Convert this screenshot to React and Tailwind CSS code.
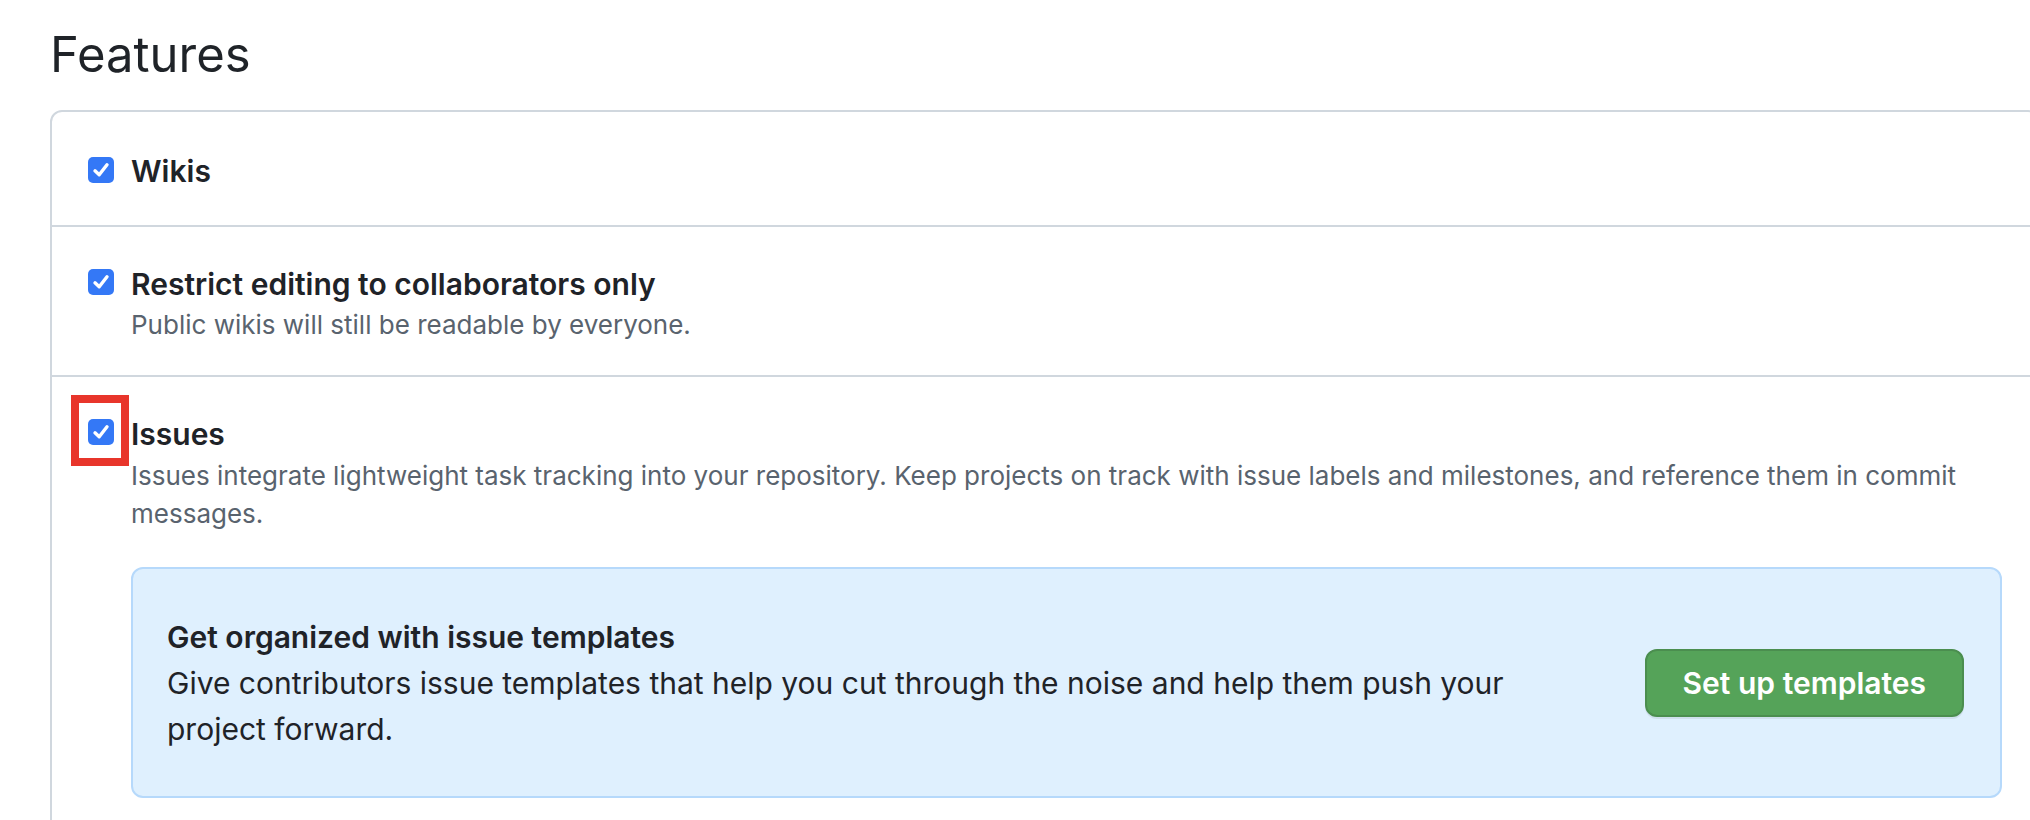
import React from "react";

const CheckBox = () => (
  <div className="w-[26px] h-[26px] rounded-[5px] bg-[#3478f6] flex items-center justify-center shrink-0">
    <svg width="22" height="22" viewBox="0 0 22 22" fill="none">
      <path
        d="M5 11.8 L9.2 15.8 L17 5.8"
        stroke="white"
        strokeWidth="3.4"
        strokeLinecap="round"
        strokeLinejoin="round"
      />
    </svg>
  </div>
);

const App = () => {
  return (
    <div className="w-[2030px] h-[820px] overflow-hidden bg-white font-['Inter',sans-serif] text-[#1f2328]">
      <div className="pl-[50px] pt-[30px]">
        <h2 className="text-[49px] leading-[50px] font-normal">Features</h2>

        <div className="mt-[30px] w-[1990px] border-2 border-[#d0d7de] rounded-[12px]">
          {/* Wikis */}
          <div className="flex gap-[17px] px-[36px] pt-[41px] pb-[36px] border-b-2 border-[#d0d7de]">
            <div className="mt-[4px]">
              <CheckBox />
            </div>
            <div className="flex-1 text-[30px] leading-[36px] font-semibold">
              Wikis
            </div>
          </div>

          {/* Restrict editing */}
          <div className="flex gap-[17px] px-[36px] pt-[39px] pb-[31px] border-b-2 border-[#d0d7de]">
            <div className="mt-[3px]">
              <CheckBox />
            </div>
            <div className="flex-1">
              <div className="text-[30px] leading-[36px] font-semibold">
                Restrict editing to collaborators only
              </div>
              <p className="mt-[4px] text-[26px] leading-[38px] text-[#59636e]">
                Public wikis will still be readable by everyone.
              </p>
            </div>
          </div>

          {/* Issues */}
          <div className="flex gap-[17px] px-[36px] pt-[39px] pb-[40px]">
            <div className="relative mt-[3px]">
              <CheckBox />
              <div className="absolute left-[-17px] top-[-24px] w-[58px] h-[71px] border-[8px] border-[#e8352b]" />
            </div>
            <div className="flex-1">
              <div className="text-[30px] leading-[36px] font-semibold">
                Issues
              </div>
              <p className="mt-[5px] text-[26px] leading-[38px] text-[#59636e]">
                Issues integrate lightweight task tracking into your repository.
                Keep projects on track with issue labels and milestones, and
                reference them in commit messages.
              </p>

              <div className="mt-[34px] flex items-center justify-between border-2 border-[#b6d9fb] bg-[#dff0fe] rounded-[12px] pl-[34px] pr-[36px] pt-[45px] pb-[44px]">
                <div className="w-[1370px]">
                  <div className="text-[30px] leading-[46px] font-semibold">
                    Get organized with issue templates
                  </div>
                  <p className="text-[30px] leading-[46px]">
                    Give contributors issue templates that help you cut through
                    the noise and help them push your project forward.
                  </p>
                </div>
                <button className="h-[68px] px-[36px] rounded-[12px] bg-[#55a359] border-2 border-[#4b8e4f] text-white text-[30px] font-semibold shadow-[0_2px_0_rgba(31,35,40,0.08)]">
                  Set up templates
                </button>
              </div>
            </div>
          </div>
        </div>
      </div>
    </div>
  );
};

export default App;
